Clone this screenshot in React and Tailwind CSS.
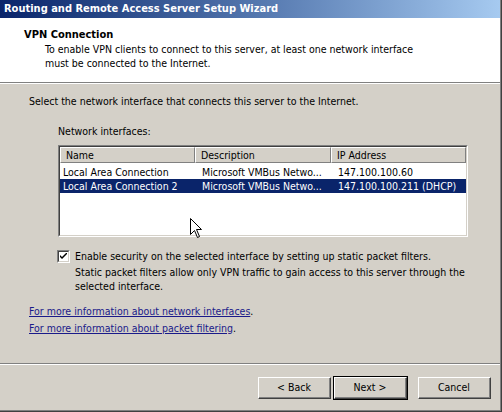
import React from "react";

const font = { fontFamily: "'DejaVu Sans Condensed', 'DejaVu Sans', 'Liberation Sans', sans-serif" };

function Btn({ children, def }) {
  return (
    <div className={def ? "border border-black" : "border border-transparent"}>
      <div className="w-[73px] h-[22px] bg-[#d4d0c8] border-t border-l border-t-white border-l-white border-r border-b border-r-[#404040] border-b-[#404040]">
        <div className="w-full h-full border-r border-b border-r-[#808080] border-b-[#808080] flex items-center justify-center text-[10.5px] text-black">
          {children}
        </div>
      </div>
    </div>
  );
}

export default function App() {
  const rows = [
    ["Local Area Connection", "Microsoft VMBus Netwo...", "147.100.100.60", false],
    ["Local Area Connection 2", "Microsoft VMBus Netwo...", "147.100.100.211 (DHCP)", true],
  ];
  return (
    <div style={font} className="relative w-[502px] h-[412px] border-r border-b border-r-[#404040] border-b-[#404040] bg-white font-stretch-condensed">
      <div className="w-full h-full flex flex-col bg-[#d4d0c8] border-r border-b border-r-[#808080] border-b-[#808080] text-black text-[10.5px]">
        {/* title bar */}
        <div className="h-[18px] shrink-0 flex items-center pl-[4px] bg-gradient-to-r from-[#0a246a] to-[#a6caf0] text-white font-bold text-[11px]">
          Routing and Remote Access Server Setup Wizard
        </div>
        {/* header */}
        <div className="h-[64px] shrink-0 bg-white pl-[24px] pt-[10px] leading-[14px]">
          <div className="font-bold text-[11px]">VPN Connection</div>
          <div className="pl-[21px]">
            <div>To enable VPN clients to connect to this server, at least one network interface</div>
            <div>must be connected to the Internet.</div>
          </div>
        </div>
        <div className="h-[2px] shrink-0 border-t border-t-[#808080] border-b border-b-white" />
        {/* body */}
        <div className="flex-1 flex flex-col pl-[29px] pt-[10px] leading-[14px]">
          <div>Select the network interface that connects this server to the Internet.</div>
          <div className="pl-[29px] mt-[16px]">Network interfaces:</div>
          <div className="ml-[29px] mt-[7px] w-[410px] h-[92px] border-t border-l border-t-[#808080] border-l-[#808080] border-b border-r border-b-white border-r-white">
            <div className="w-full h-full bg-white border-t border-l border-t-[#404040] border-l-[#404040] border-b border-r border-b-[#d4d0c8] border-r-[#d4d0c8]">
              <div className="flex h-[16px]">
                {[["Name", "w-[135px]"], ["Description", "w-[136px]"], ["IP Address", "flex-1"]].map(([t, w]) => (
                  <div key={t} className={`${w} h-full bg-[#d4d0c8] border-t border-l border-t-white border-l-white border-r border-b border-r-[#808080] border-b-[#808080] flex items-center pl-[5px]`}>
                    {t}
                  </div>
                ))}
              </div>
              <div className="mt-[2px]">
                {rows.map(([a, b, c, sel]) => (
                  <div key={a} className={`flex h-[14px] items-center ${sel ? "bg-[#0a246a] text-white" : ""}`}>
                    <div className="w-[135px] pl-[3px] whitespace-nowrap overflow-hidden">{a}</div>
                    <div className="w-[136px] pl-[7px] whitespace-nowrap overflow-hidden">{b}</div>
                    <div className="flex-1 pl-[7px] whitespace-nowrap overflow-hidden">{c}</div>
                  </div>
                ))}
              </div>
            </div>
          </div>
          {/* checkbox */}
          <div className="flex mt-[12px] pl-[28px]">
            <div className="w-[13px] h-[13px] mt-[1px] shrink-0 border-t border-l border-t-[#808080] border-l-[#808080] border-b border-r border-b-white border-r-white">
              <div className="w-full h-full bg-white border-t border-l border-t-[#404040] border-l-[#404040] border-b border-r border-b-[#d4d0c8] border-r-[#d4d0c8] flex items-center justify-center">
                <svg width="7" height="7" viewBox="0 0 7 7">
                  <path d="M0 2 L0 4 L2 6 L7 1 L7 -1 L2 4 Z" fill="#000" />
                </svg>
              </div>
            </div>
            <div className="pl-[5px]">
              <div>Enable security on the selected interface by setting up static packet filters.</div>
              <div className="mt-[2px]">Static packet filters allow only VPN traffic to gain access to this server through the</div>
              <div>selected interface.</div>
            </div>
          </div>
          {/* links */}
          <div className="mt-[10px] leading-[17px]">
            <div><span className="underline text-[#1a1a8a]">For more information about network interfaces</span>.</div>
            <div><span className="underline text-[#1a1a8a]">For more information about packet filtering</span>.</div>
          </div>
        </div>
        <div className="h-[2px] shrink-0 border-t border-t-[#808080] border-b border-b-white" />
        <div className="h-[45px] shrink-0 flex justify-end items-start pt-[11px] pr-[8px]">
          <Btn>&lt; Back</Btn>
          <div className="ml-[1px]"><Btn def>Next &gt;</Btn></div>
          <div className="ml-[9px]"><Btn>Cancel</Btn></div>
        </div>
      </div>
      {/* mouse cursor */}
      <svg className="absolute left-[190px] top-[218px]" width="13" height="20" viewBox="0 0 13 20">
        <path d="M0.5 0.5 L0.5 16.5 L4.5 12.5 L7.5 19.5 L9.5 18.5 L6.5 11.5 L11.5 11.5 Z" fill="#fff" stroke="#000" strokeWidth="1" />
      </svg>
    </div>
  );
}
